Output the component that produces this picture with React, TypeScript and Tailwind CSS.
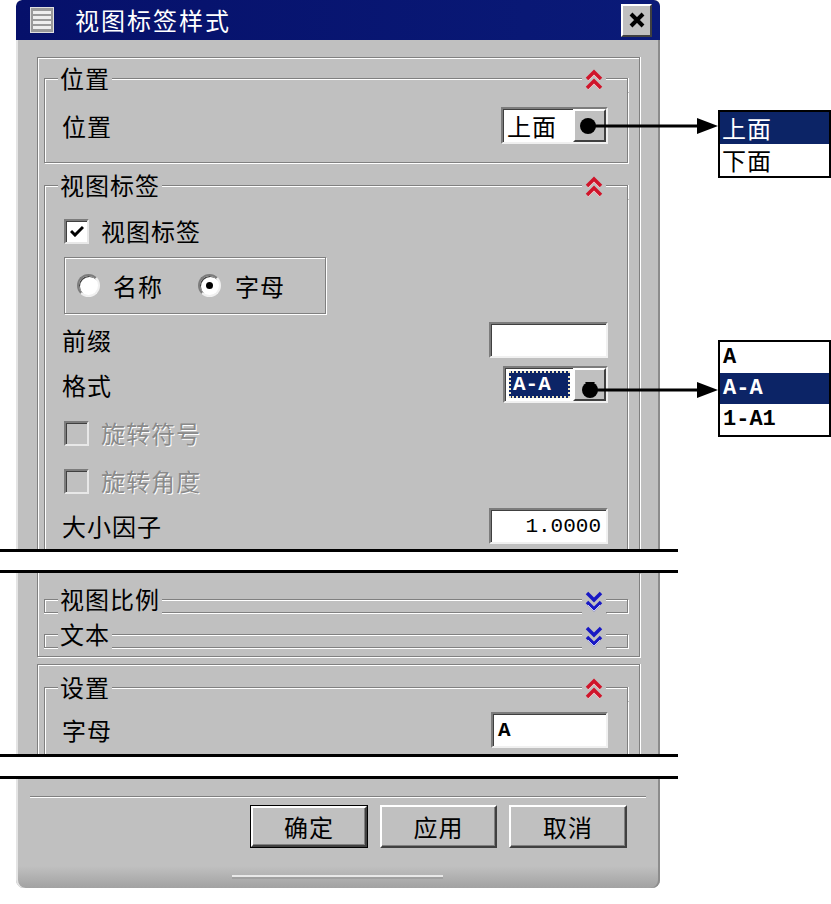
import React from 'react';

type Dir = 'up' | 'down';

function Chevrons({ dir }: { dir: Dir }) {
  if (dir === 'up') {
    return (
      <svg width="18" height="22" viewBox="0 0 18 22">
        <g fill="none" strokeWidth="3.5">
          <polyline points="2,10 9,3 16,10" stroke="#d0142a" />
          <polyline points="2,19 9,12 16,19" stroke="#d0142a" />
        </g>
        <g fill="none" strokeWidth="1">
          <polyline points="3,12 9,6 15,12" stroke="#f6b4bc" />
          <polyline points="3,21 9,15 15,21" stroke="#f6b4bc" />
        </g>
      </svg>
    );
  }
  return (
    <svg width="18" height="22" viewBox="0 0 18 22">
      <g fill="none" strokeWidth="3.5">
        <polyline points="2,3 9,10 16,3" stroke="#1818c4" />
        <polyline points="2,12 9,19 16,12" stroke="#1818c4" />
      </g>
      <g fill="none" strokeWidth="1">
        <polyline points="3,15 9,21 15,15" stroke="#c4c8f8" />
      </g>
    </svg>
  );
}

function Group({
  title,
  open = true,
  dir = 'up',
  children,
}: {
  title: string;
  open?: boolean;
  dir?: Dir;
  children?: React.ReactNode;
}) {
  return (
    <div className="flex flex-col">
      <div className="flex h-[28px]">
        <div className="flex w-[14px] flex-col">
          <div className="h-[14px]" />
          <div
            className={
              open
                ? 'flex-1 border-l border-t border-[#808080] shadow-[inset_1px_1px_0_#fff]'
                : 'flex-1 border-b border-l border-t border-[#808080] shadow-[inset_1px_1px_0_#fff,0_1px_0_#fff]'
            }
          />
        </div>
        <span className="px-[2px] leading-[28px]">{title}</span>
        <div className="flex flex-1 flex-col">
          <div className="h-[14px]" />
          <div
            className={
              open
                ? 'flex-1 border-t border-[#808080] shadow-[inset_0_1px_0_#fff]'
                : 'flex-1 border-b border-t border-[#808080] shadow-[inset_0_1px_0_#fff,0_1px_0_#fff]'
            }
          />
        </div>
        <div className="flex w-[24px] items-center justify-center pt-[3px]">
          <Chevrons dir={dir} />
        </div>
        <div className="flex w-[22px] flex-col">
          <div className="h-[14px]" />
          <div
            className={
              open
                ? 'flex-1 border-r border-t border-[#808080] shadow-[inset_0_1px_0_#fff,1px_0_0_#fff]'
                : 'flex-1 border-b border-r border-t border-[#808080] shadow-[inset_0_1px_0_#fff,1px_1px_0_#fff]'
            }
          />
        </div>
      </div>
      {open && (
        <div className="border-x border-b border-[#808080] shadow-[inset_1px_0_0_#fff,1px_1px_0_#fff]">
          {children}
        </div>
      )}
    </div>
  );
}

function Check({ checked = false, disabled = false }: { checked?: boolean; disabled?: boolean }) {
  return (
    <div
      className={`flex h-[25px] w-[25px] items-center justify-center border-2 border-b-[#e8e8e8] border-l-[#7c7c7c] border-r-[#e8e8e8] border-t-[#7c7c7c] shadow-[inset_1px_1px_0_#404040] ${
        disabled ? 'bg-[#c0c0c0]' : 'bg-white'
      }`}
    >
      {checked && (
        <svg width="14" height="12" viewBox="0 0 14 12">
          <polyline points="1,6 5,10 13,2" fill="none" stroke="#000" strokeWidth="3" />
        </svg>
      )}
    </div>
  );
}

function Radio({ on = false }: { on?: boolean }) {
  return (
    <div className="flex h-[23px] w-[23px] items-center justify-center rounded-full border-2 border-b-[#f0f0f0] border-l-[#7c7c7c] border-r-[#f0f0f0] border-t-[#7c7c7c] bg-white shadow-[inset_1px_1px_0_#404040]">
      {on && <div className="h-[7px] w-[7px] rounded-full bg-black" />}
    </div>
  );
}

function Combo({ w, children }: { w: string; children: React.ReactNode }) {
  return (
    <div
      className={`flex h-[37px] ${w} border-2 border-b-[#f0f0f0] border-l-[#7c7c7c] border-r-[#f0f0f0] border-t-[#7c7c7c] bg-white shadow-[inset_1px_1px_0_#404040]`}
    >
      <div className="flex flex-1 items-center pl-[4px] pr-[3px]">{children}</div>
      <div className="flex w-[33px] items-center justify-center border-2 border-b-[#404040] border-l-white border-r-[#404040] border-t-white bg-[#c0c0c0]">
        <svg width="10" height="6" viewBox="0 0 10 6">
          <polygon points="0,0 10,0 5,6" fill="#000" />
        </svg>
      </div>
    </div>
  );
}

function Field({ w, children, right = false }: { w: string; children?: React.ReactNode; right?: boolean }) {
  return (
    <div
      className={`flex h-[36px] ${w} items-center border-2 border-b-[#f0f0f0] border-l-[#7c7c7c] border-r-[#f0f0f0] border-t-[#7c7c7c] bg-white px-[5px] shadow-[inset_1px_1px_0_#404040] ${
        right ? 'justify-end' : 'justify-start'
      }`}
    >
      {children}
    </div>
  );
}

function Btn({ label, def = false, w }: { label: string; def?: boolean; w: string }) {
  return (
    <div className={`flex h-[43px] ${w} ${def ? 'border border-black' : ''}`}>
      <div className="flex flex-1 items-center justify-center border-2 border-b-[#404040] border-l-white border-r-[#404040] border-t-white shadow-[inset_-1px_-1px_0_#808080]">
        <span className="leading-none tracking-[1px]">{label}</span>
      </div>
    </div>
  );
}

function Break({ h }: { h: string }) {
  return <div className={`w-[678px] ${h} border-y-[3px] border-black bg-white`} />;
}

const dim = 'text-[#8a8a8a] [text-shadow:1px_1px_0_#fff]';

export default function App() {
  return (
    <div className="relative h-[904px] w-[831px] overflow-hidden bg-white font-['Noto_Sans_CJK_SC','Noto_Sans',sans-serif] text-[24px] leading-none tracking-[1px] text-black">
      <div className="flex flex-col">
        {/* top part of the dialog */}
        <div className="ml-[16px] flex h-[549px] w-[644px] flex-col overflow-hidden rounded-t-[6px] bg-[#c0c0c0] shadow-[inset_2px_0_0_#e4e4e4,inset_-2px_0_0_#8c8c8c]">
          <div className="flex h-[40px] shrink-0 items-center rounded-t-[6px] bg-linear-to-r from-[#06106a] to-[#0a1a78] pl-[14px] pr-[8px]">
            <div className="flex h-[26px] w-[24px] flex-col justify-around border border-[#e0e0e0] bg-[#9a9a9a] px-[2px] py-[2px]">
              <div className="h-[3px] bg-[#eeeeee]" />
              <div className="h-[3px] bg-[#eeeeee]" />
              <div className="h-[3px] bg-[#eeeeee]" />
              <div className="h-[3px] bg-[#eeeeee]" />
            </div>
            <span className="ml-[21px] text-white tracking-[2px]">视图标签样式</span>
            <div className="ml-auto flex h-[33px] w-[31px] items-center justify-center border-2 border-b-[#404040] border-l-white border-r-[#404040] border-t-white bg-[#c0c0c0]">
              <svg width="16" height="16" viewBox="0 0 16 16">
                <path d="M2 2 L14 14 M14 2 L2 14" stroke="#000" strokeWidth="4" />
              </svg>
            </div>
          </div>

          <div className="ml-[21px] mt-[17px] w-[603px] border border-[#808080] pl-[6px] pr-[11px] pt-[6px] shadow-[inset_1px_1px_0_#fff,1px_0_0_#fff]">
            <Group title="位置">
              <div className="flex items-center justify-between pb-[18px] pl-[17px] pr-[19px] pt-[15px]">
                <span>位置</span>
                <Combo w="w-[107px]">
                  <span>上面</span>
                </Combo>
              </div>
            </Group>

            <div className="mt-[8px]">
              <Group title="视图标签">
                <div className="flex flex-col pb-[30px] pl-[17px] pr-[19px] pt-[18px]">
                  <div className="flex h-[28px] items-center gap-[12px] pl-[2px]">
                    <Check checked />
                    <span>视图标签</span>
                  </div>
                  <div className="ml-[2px] mt-[12px] flex h-[57px] w-[262px] items-center border border-[#808080] pl-[12px] shadow-[inset_1px_1px_0_#fff,1px_1px_0_#fff]">
                    <Radio />
                    <span className="ml-[13px]">名称</span>
                    <div className="ml-[35px]">
                      <Radio on />
                    </div>
                    <span className="ml-[14px]">字母</span>
                  </div>
                  <div className="mt-[8px] flex items-center justify-between">
                    <span>前缀</span>
                    <Field w="w-[119px]" />
                  </div>
                  <div className="mt-[8px] flex items-center justify-between">
                    <span>格式</span>
                    <Combo w="w-[105px]">
                      <div className="flex h-[27px] flex-1 items-center border-2 border-dotted border-[#efe6c4] bg-[#0c2466] pl-[2px]">
                        <span className="font-['Liberation_Mono',monospace] text-[21px] font-bold tracking-normal text-white">A-A</span>
                      </div>
                    </Combo>
                  </div>
                  <div className="mt-[16px] flex h-[28px] items-center gap-[12px] pl-[2px]">
                    <Check disabled />
                    <span className={dim}>旋转符号</span>
                  </div>
                  <div className="mt-[20px] flex h-[28px] items-center gap-[12px] pl-[2px]">
                    <Check disabled />
                    <span className={dim}>旋转角度</span>
                  </div>
                  <div className="mt-[13px] flex items-center justify-between">
                    <span>大小因子</span>
                    <Field w="w-[119px]" right>
                      <span className="font-['Liberation_Mono',monospace] text-[21px] tracking-normal">1.0000</span>
                    </Field>
                  </div>
                </div>
              </Group>
            </div>
          </div>
        </div>

        <Break h="h-[24px]" />

        {/* middle part */}
        <div className="ml-[16px] flex h-[181px] w-[644px] flex-col overflow-hidden bg-[#c0c0c0] shadow-[inset_2px_0_0_#e4e4e4,inset_-2px_0_0_#8c8c8c]">
          <div className="ml-[21px] w-[603px] border-x border-b border-[#808080] pb-[8px] pl-[6px] pr-[11px] pt-[12px] shadow-[inset_1px_0_0_#fff,1px_1px_0_#fff]">
            <Group title="视图比例" open={false} dir="down" />
            <div className="mt-[7px]">
              <Group title="文本" open={false} dir="down" />
            </div>
          </div>
          <div className="ml-[21px] mt-[7px] w-[603px] border-x border-t border-[#808080] pl-[6px] pr-[11px] pt-[8px] shadow-[inset_1px_1px_0_#fff,1px_0_0_#fff]">
            <Group title="设置">
              <div className="flex items-center justify-between pb-[20px] pl-[17px] pr-[19px] pt-[11px]">
                <span>字母</span>
                <Field w="w-[117px]">
                  <span className="font-['Liberation_Mono',monospace] text-[21px] font-bold tracking-normal">A</span>
                </Field>
              </div>
            </Group>
          </div>
        </div>

        <Break h="h-[25px]" />

        {/* bottom part */}
        <div className="ml-[16px] flex h-[109px] w-[644px] flex-col rounded-b-[8px] bg-linear-to-b from-[#c0c0c0] from-80% to-[#a2a2a2] shadow-[inset_2px_0_0_#e4e4e4,inset_-2px_0_0_#8c8c8c]">
          <div className="mx-[14px] mt-[17px] h-[2px] border-b border-t border-b-white border-t-[#808080]" />
          <div className="mt-[7px] flex justify-end gap-[12px] pr-[33px]">
            <Btn label="确定" def w="w-[118px]" />
            <Btn label="应用" w="w-[117px]" />
            <Btn label="取消" w="w-[118px]" />
          </div>
          <div className="ml-[216px] mt-[27px] h-[4px] w-[211px] border-t-2 border-[#e8e8e8] bg-[#a0a0a0]" />
        </div>
      </div>

      {/* callout arrows */}
      <svg className="pointer-events-none absolute left-0 top-0" width="831" height="904" viewBox="0 0 831 904">
        <circle cx="588" cy="126" r="8" fill="#000" />
        <line x1="588" y1="126" x2="700" y2="126" stroke="#000" strokeWidth="3" />
        <polygon points="697,118 718,126 697,134" fill="#000" />
        <circle cx="590" cy="390" r="8" fill="#000" />
        <line x1="590" y1="390" x2="700" y2="390" stroke="#000" strokeWidth="3" />
        <polygon points="697,382 718,390 697,398" fill="#000" />
      </svg>

      {/* opened drop-down lists */}
      <div className="absolute left-[718px] top-[110px] w-[113px] border-2 border-black bg-white">
        <div className="flex h-[32px] items-center bg-[#0c2466] pl-[2px] text-white">上面</div>
        <div className="flex h-[32px] items-center pl-[2px]">下面</div>
      </div>
      <div className="absolute left-[718px] top-[340px] w-[113px] border-2 border-black bg-white font-['Liberation_Mono',monospace] text-[22px] font-bold tracking-normal">
        <div className="flex h-[31px] items-center pl-[3px]">A</div>
        <div className="flex h-[31px] items-center bg-[#0c2466] pl-[3px] text-white">A-A</div>
        <div className="flex h-[31px] items-center pl-[3px]">1-A1</div>
      </div>
    </div>
  );
}
